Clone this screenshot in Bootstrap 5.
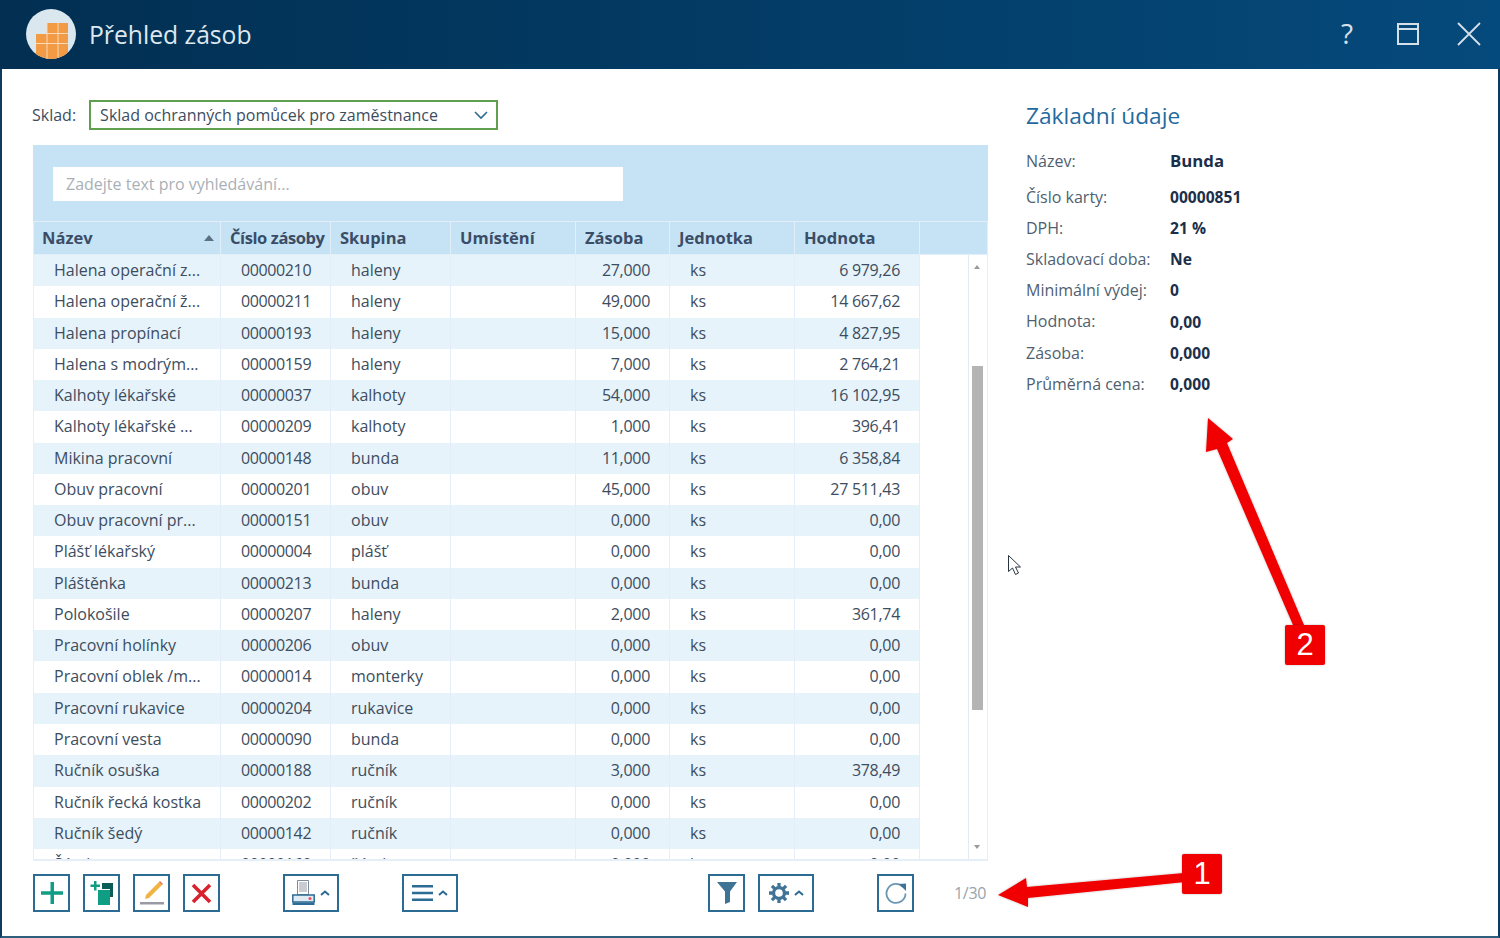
<!DOCTYPE html>
<html lang="cs">
<head>
<meta charset="utf-8">
<title>Přehled zásob</title>
<link href="https://cdn.jsdelivr.net/npm/bootstrap@5.3.0/dist/css/bootstrap.min.css" rel="stylesheet">
<style>
html,body{height:938px;overflow:hidden;background:#fff}
body{font-family:"Open Sans","Noto Sans",sans-serif;font-size:16px;color:#3d4d5e;position:relative}
.win{width:1500px;height:938px;border:solid #0b3c60;border-width:0 2px 2px 2px;border-bottom-color:#2e5f7c}
.titlebar{height:69px;margin:0 -2px;background:linear-gradient(90deg,#022f52 0%,#033a63 45%,#054a7c 100%);color:#dfe8ef;padding-left:26px}
.applogo{margin-top:-2px;flex:none}
.titlebar h1{font-size:24.7px;font-weight:400;margin:2px 0 0 13px;color:#dfe7ee;line-height:1}
.winbtns{padding-right:1px}
.winbtn{width:61px;height:67px;display:flex;align-items:center;justify-content:center;color:#d5e0e9;font-size:28px;line-height:1;align-self:flex-start}
.winbtn.qm{height:65px;padding-left:1px}
.leftcol{width:955px;margin-left:31px}
.toprow{height:30px;margin-top:31px;margin-bottom:15px;margin-left:-1px}
.skl{color:#3d4d5e;margin:0 13px 0 0;font-size:16px}
.skl-sel{width:409px;height:30px;border:2px solid #5fa04d;border-radius:0;font-size:16px;color:#3d4d5e;padding:0 30px 0 9px;line-height:26px;background-position:right 8px center;background-size:14px 10px;font-family:inherit;
background-image:url("data:image/svg+xml,%3csvg xmlns='http://www.w3.org/2000/svg' viewBox='0 0 14 10'%3e%3cpath fill='none' stroke='%232d6b94' stroke-width='1.6' d='M1 2l6 6 6-6'/%3e%3c/svg%3e")}
.searchbar{background:#c5e3f5;height:77px;padding:22px 20px 0;border-bottom:1px solid #e3eff8}
.srch{width:570px;height:34px;border:0;border-radius:0;padding:0 13px;font-size:16px;color:#3d4d5e}
.srch::placeholder{color:#a9b0b6;opacity:1}
.gridwrap{height:639px;overflow:hidden;position:relative;border-bottom:2px solid #e6eff8;border-right:1px solid #e6eff8;border-left:1px solid #e6eff8}
.sheet{table-layout:fixed;width:887px;margin:0 0 0 -1px;border-collapse:separate;border-spacing:0}
.sheet th,.sheet td{padding:0;border:0;border-right:1px solid #e3eef8;white-space:nowrap;overflow:hidden;background:transparent;box-shadow:none;color:inherit}
.sheet thead th{background:#c5e3f5;height:33px;font-weight:700;font-size:16.5px;color:#3b4d66;padding:0 0 3px 9px;border-bottom:1px solid #e3eff8;border-right:1px solid #e3eff8}
.sheet thead th.tight{letter-spacing:-.42px}
.sheet tbody td{height:31.28px;padding-left:20px;color:#3d4d5e;font-size:16px;line-height:31px}
.sheet tbody td.nm{padding-left:21px}
.sheet tbody td.cd{letter-spacing:-.38px}
.sheet tbody tr:nth-child(odd) td{background:#e6f3fb}
.sheet tbody td.num{text-align:right;padding-left:0;padding-right:19px;letter-spacing:-.3px}
.hdfill{position:absolute;left:886px;top:0;right:0;height:33px;background:#c5e3f5;border-bottom:1px solid #e3eff8}
.sorter{border-left:5px solid transparent;border-right:5px solid transparent;border-bottom:6px solid #5d7183;position:absolute;left:171px;top:13px}
.vscroll{position:absolute;left:934px;right:0;top:33px;bottom:0;border-left:1px solid #e3eaf0;background:#fff}
.vthumb{position:absolute;left:3px;width:11px;top:111px;height:344px;background:#b4b4b4}
.varrow{position:absolute;left:5px;border-left:3.5px solid transparent;border-right:3.5px solid transparent}
.vup{top:10px;border-bottom:4px solid #9a9a9a}
.vdown{bottom:10px;border-top:4px solid #9a9a9a}
.tools{height:38px;margin-top:13px;width:955px}
.tbtn{height:38px;width:37px;border:2px solid #2c6b94;border-radius:0;padding:0;background:#fff;display:flex;align-items:center;justify-content:center;gap:5px;flex:none}
.tbtn.wide{width:56px}
.ml13{margin-left:13px}.ml63{margin-left:63px}.ml250{margin-left:250px}
.pager{color:#98a4ad;font-size:16px;margin-left:40px;letter-spacing:-.3px}
.rightcol{margin-left:38px;padding-top:30px;width:400px}
.rightcol h2{font-size:22.7px;font-weight:400;color:#1f6a9e;margin:0 0 16px;line-height:34px}
.kv{display:flex;height:31.2px;align-items:center;font-size:16px}
.kv.first{height:33px;align-items:flex-start}
.kv.first b{font-size:16.8px;line-height:24px}
.kv span:first-child{width:144px;color:#4f5f70;padding-bottom:2px}
.kv.first span:first-child{padding-bottom:0}
.kv b{color:#1c2f4a;font-weight:700;font-size:15.6px}
.ann{position:absolute;left:0;top:0;pointer-events:none}
.callout{position:absolute;width:40px;height:40px;background:#f00000;color:#fff;border-radius:2px;font-family:"Liberation Sans",sans-serif;font-size:31px;display:flex;align-items:center;justify-content:center;box-shadow:0 0 2px rgba(0,0,0,.35)}
.c1{left:1182px;top:854px}.c2{left:1285px;top:625px}
</style>
</head>
<body>
<div class="win d-flex flex-column">
  <header class="titlebar d-flex align-items-center">
    <svg width="50" height="50" viewBox="0 0 50 50" class="applogo"><defs><clipPath id="lg"><circle cx="25" cy="25" r="25"/></clipPath></defs><circle cx="25" cy="25" r="25" fill="#dbe7ef"/><g clip-path="url(#lg)"><path fill="#f29a44" d="M21 14h21v11h-21zM10 25h32v25H10z"/><path stroke="#f8d9b8" stroke-width="1" d="M21 14v36M32 14v36M21 24.500h21M10 34.500h32"/></g></svg>
    <h1>Přehled zásob</h1>
    <div class="winbtns d-flex ms-auto align-self-start">
      <div class="winbtn qm">?</div>
      <div class="winbtn"><svg width="24" height="24" viewBox="0 0 24 24" fill="none" stroke="#d5e0e9" stroke-width="2"><path d="M2 2h20v20H2zM2 7h20"/></svg></div>
      <div class="winbtn"><svg width="26" height="26" viewBox="0 0 26 26" fill="none" stroke="#d5e0e9" stroke-width="1.800"><path d="M2 2l22 22M24 2L2 24"/></svg></div>
    </div>
  </header>
  <div class="d-flex flex-grow-1">
    <main class="leftcol">
      <div class="toprow d-flex align-items-center">
        <label class="skl" for="sk">Sklad:</label>
        <select id="sk" class="form-select skl-sel"><option>Sklad ochranných pomůcek pro zaměstnance</option></select>
      </div>
      <div class="searchbar"><input class="form-control srch" placeholder="Zadejte text pro vyhledávání..."></div>
      <div class="gridwrap">
        <div class="hdfill"></div>
        <table class="table sheet">
          <colgroup><col style="width:188px"><col style="width:110px"><col style="width:120px"><col style="width:125px"><col style="width:94px"><col style="width:125px"><col style="width:125px"></colgroup>
          <thead><tr><th class="position-relative">Název<i class="sorter"></i></th><th class="tight">Číslo zásoby</th><th>Skupina</th><th>Umístění</th><th>Zásoba</th><th>Jednotka</th><th>Hodnota</th></tr></thead>
          <tbody>
<tr><td class="nm">Halena operační z...</td><td class="cd">00000210</td><td>haleny</td><td></td><td class="num">27,000</td><td>ks</td><td class="num">6 979,26</td></tr>
<tr><td class="nm">Halena operační ž...</td><td class="cd">00000211</td><td>haleny</td><td></td><td class="num">49,000</td><td>ks</td><td class="num">14 667,62</td></tr>
<tr><td class="nm">Halena propínací</td><td class="cd">00000193</td><td>haleny</td><td></td><td class="num">15,000</td><td>ks</td><td class="num">4 827,95</td></tr>
<tr><td class="nm">Halena s modrým...</td><td class="cd">00000159</td><td>haleny</td><td></td><td class="num">7,000</td><td>ks</td><td class="num">2 764,21</td></tr>
<tr><td class="nm">Kalhoty lékařské</td><td class="cd">00000037</td><td>kalhoty</td><td></td><td class="num">54,000</td><td>ks</td><td class="num">16 102,95</td></tr>
<tr><td class="nm">Kalhoty lékařské ...</td><td class="cd">00000209</td><td>kalhoty</td><td></td><td class="num">1,000</td><td>ks</td><td class="num">396,41</td></tr>
<tr><td class="nm">Mikina pracovní</td><td class="cd">00000148</td><td>bunda</td><td></td><td class="num">11,000</td><td>ks</td><td class="num">6 358,84</td></tr>
<tr><td class="nm">Obuv pracovní</td><td class="cd">00000201</td><td>obuv</td><td></td><td class="num">45,000</td><td>ks</td><td class="num">27 511,43</td></tr>
<tr><td class="nm">Obuv pracovní pr...</td><td class="cd">00000151</td><td>obuv</td><td></td><td class="num">0,000</td><td>ks</td><td class="num">0,00</td></tr>
<tr><td class="nm">Plášť lékařský</td><td class="cd">00000004</td><td>plášť</td><td></td><td class="num">0,000</td><td>ks</td><td class="num">0,00</td></tr>
<tr><td class="nm">Pláštěnka</td><td class="cd">00000213</td><td>bunda</td><td></td><td class="num">0,000</td><td>ks</td><td class="num">0,00</td></tr>
<tr><td class="nm">Polokošile</td><td class="cd">00000207</td><td>haleny</td><td></td><td class="num">2,000</td><td>ks</td><td class="num">361,74</td></tr>
<tr><td class="nm">Pracovní holínky</td><td class="cd">00000206</td><td>obuv</td><td></td><td class="num">0,000</td><td>ks</td><td class="num">0,00</td></tr>
<tr><td class="nm">Pracovní oblek /m...</td><td class="cd">00000014</td><td>monterky</td><td></td><td class="num">0,000</td><td>ks</td><td class="num">0,00</td></tr>
<tr><td class="nm">Pracovní rukavice</td><td class="cd">00000204</td><td>rukavice</td><td></td><td class="num">0,000</td><td>ks</td><td class="num">0,00</td></tr>
<tr><td class="nm">Pracovní vesta</td><td class="cd">00000090</td><td>bunda</td><td></td><td class="num">0,000</td><td>ks</td><td class="num">0,00</td></tr>
<tr><td class="nm">Ručník osuška</td><td class="cd">00000188</td><td>ručník</td><td></td><td class="num">3,000</td><td>ks</td><td class="num">378,49</td></tr>
<tr><td class="nm">Ručník řecká kostka</td><td class="cd">00000202</td><td>ručník</td><td></td><td class="num">0,000</td><td>ks</td><td class="num">0,00</td></tr>
<tr><td class="nm">Ručník šedý</td><td class="cd">00000142</td><td>ručník</td><td></td><td class="num">0,000</td><td>ks</td><td class="num">0,00</td></tr>
<tr><td class="nm">Šátek</td><td class="cd">00000160</td><td>šátek</td><td></td><td class="num">0,000</td><td>ks</td><td class="num">0,00</td></tr>
          </tbody>
        </table>
        <div class="vscroll"><i class="varrow vup"></i><i class="vthumb"></i><i class="varrow vdown"></i></div>
      </div>
      <div class="tools d-flex align-items-center">
        <button class="btn tbtn" aria-label="Přidat"><svg width="22" height="22" viewBox="0 0 22 22"><path fill="#0f9d83" d="M9.500 0h3.500v9.300h9v3.500h-9V22H9.500v-9.200H0V9.300h9.500z"/></svg></button>
        <button class="btn tbtn ml13" aria-label="Kopie"><svg width="24" height="26" viewBox="0 0 24 26"><path fill="#0b5d58" d="M12 3h11v14h-3V9h-8z"/><path fill="#0f9d83" d="M8 10h12v15H8z"/><path fill="#0f9d83" d="M4 1h2.500v3.500H10V7H6.500v3.500H4V7H.5V4.500H4z"/></svg></button>
        <button class="btn tbtn ml13" aria-label="Upravit"><svg width="24" height="24" viewBox="0 0 24 24"><path fill="#f0b445" d="M19 1l3 3L9 17l-4 1 1-4z"/><path fill="#e56a52" d="M19 1l1-1 3 3-1 1z"/><path fill="#9a9aa6" d="M0 21h24v2.500H0z"/></svg></button>
        <button class="btn tbtn ml13" aria-label="Smazat"><svg width="21" height="21" viewBox="0 0 21 21"><path fill="none" stroke="#d8232f" stroke-width="3.600" d="M2 2l17 17M19 2L2 19"/></svg></button>
        <button class="btn tbtn wide ml63" aria-label="Tisk"><svg width="23" height="26" viewBox="0 0 23 26"><path fill="#fff" stroke="#7d8c9a" d="M5.500 .5h11v14h-11z"/><path fill="#c9ccd1" d="M7 2h8v10H7z"/><path fill="#dfeaf2" stroke="#2c6b94" stroke-width="1.500" d="M.8 15h21.400v7H.8z"/><path fill="#2c6b94" d="M.5 22.500h22V25H.5z"/><circle cx="18" cy="18.500" r="1.500" fill="#ef4f5c"/></svg><svg width="10" height="6" viewBox="0 0 10 6"><path fill="none" stroke="#2c6b94" stroke-width="2" d="M1 5l4-3.500L9 5"/></svg></button>
        <button class="btn tbtn wide ml63" aria-label="Menu"><svg width="21" height="16" viewBox="0 0 21 16"><path fill="#2c6b94" d="M0 0h21v2.500H0zM0 6.800h21v2.500H0zM0 13.500h21V16H0z"/></svg><svg width="10" height="6" viewBox="0 0 10 6"><path fill="none" stroke="#2c6b94" stroke-width="2" d="M1 5l4-3.500L9 5"/></svg></button>
        <button class="btn tbtn ml250" aria-label="Filtr"><svg width="20" height="22" viewBox="0 0 20 22"><path fill="#3f7396" d="M0 0h20l-7 9.500V20l-5 2V9.500z"/></svg></button>
        <button class="btn tbtn wide ml13" aria-label="Nastavení"><svg width="20" height="20" viewBox="0 0 22 22"><circle cx="11" cy="11" r="6" fill="none" stroke="#3f7396" stroke-width="3.600"/><path stroke="#3f7396" stroke-width="3.600" d="M11 0v4M11 18v4M0 11h4M18 11h4M3.200 3.200L6 6M16 16l2.800 2.800M18.800 3.200L16 6M6 16l-2.800 2.800"/></svg><svg width="10" height="6" viewBox="0 0 10 6"><path fill="none" stroke="#2c6b94" stroke-width="2" d="M1 5l4-3.500L9 5"/></svg></button>
        <button class="btn tbtn ml63" aria-label="Obnovit"><svg width="22" height="22" viewBox="0 0 22 22"><path fill="none" stroke="#6b97b3" stroke-width="1.800" d="M18 5A9.500 9.500 0 1 0 20.500 11.500"/><path fill="#3f7396" d="M14 2l7-.5V9z"/></svg></button>
        <span class="pager">1/30</span>
      </div>
    </main>
    <aside class="rightcol">
      <h2>Základní údaje</h2>
      <div class="kv first"><span>Název:</span><b>Bunda</b></div>
      <div class="kv"><span>Číslo karty:</span><b>00000851</b></div>
      <div class="kv"><span>DPH:</span><b>21 %</b></div>
      <div class="kv"><span>Skladovací doba:</span><b>Ne</b></div>
      <div class="kv"><span>Minimální výdej:</span><b>0</b></div>
      <div class="kv"><span>Hodnota:</span><b>0,00</b></div>
      <div class="kv"><span>Zásoba:</span><b>0,000</b></div>
      <div class="kv"><span>Průměrná cena:</span><b>0,000</b></div>
    </aside>
  </div>
</div>
<svg class="ann" width="1500" height="938" viewBox="0 0 1500 938">
  <defs><filter id="sh" x="-5%" y="-5%" width="110%" height="110%"><feDropShadow dx="0" dy="0" stdDeviation="1" flood-color="#000" flood-opacity=".3"/></filter></defs>
  <path fill="#f00000" filter="url(#sh)" d="M1184 873l1 9-157 16 0 9-30-12 28-17 1 9z"/>
  <path fill="#f00000" filter="url(#sh)" d="M1208 418l25 21-6 4 77 182-11 0-76-176-11 3z"/>
  <path fill="#fff" stroke="#2a3440" stroke-width="1" d="M1008.500 555.500v16l4-3.500 3 6.500 3-1.500-3-6h5z"/>
</svg>
<div class="callout c1">1</div>
<div class="callout c2">2</div>
<script src="https://cdn.jsdelivr.net/npm/bootstrap@5.3.0/dist/js/bootstrap.bundle.min.js"></script>
</body>
</html>
